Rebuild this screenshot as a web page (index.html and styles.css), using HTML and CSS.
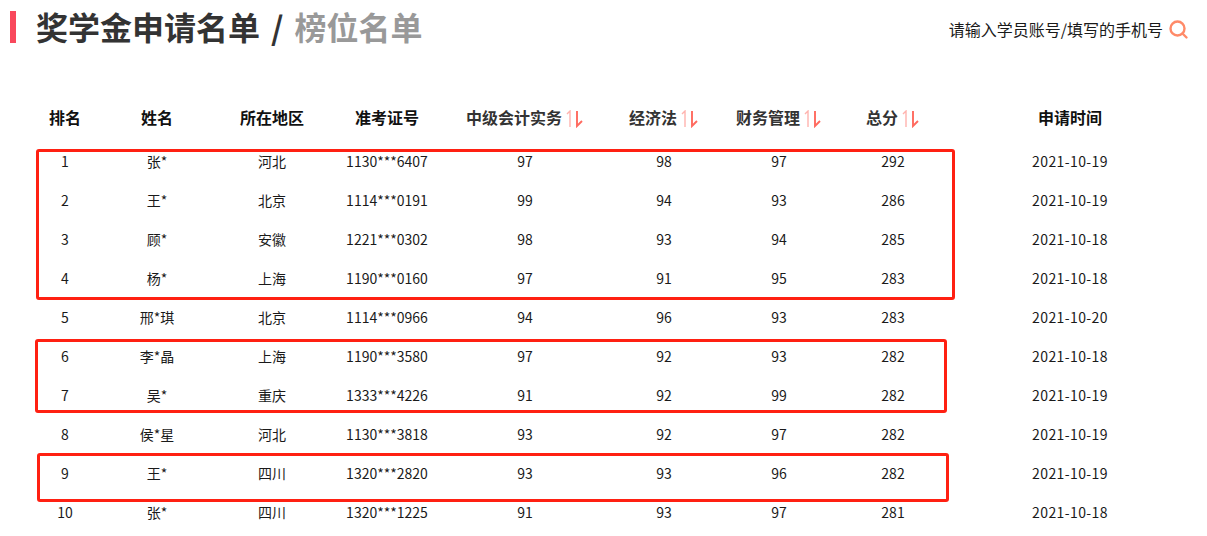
FILE: index.html
```html
<!DOCTYPE html>
<html lang="zh-CN">
<head>
    <meta charset="UTF-8">
    <title>奖学金申请名单</title>
    <link rel="stylesheet" href="styles.css">
</head>
<body>
    <div class="page">
        <div class="top">
            <h1 class="title"><span class="title-mark"></span><span>奖学金申请名单<span class="title-sep">/</span><span class="title-sub">榜位名单</span></span></h1>
            <div class="search">
                <span class="search-text">请输入学员账号/填写的手机号</span>
                <svg class="search-icon" width="20" height="20" viewBox="0 0 20 20" fill="none" stroke="#ff8a68" stroke-width="2.4">
                    <circle cx="8.5" cy="8.5" r="7"/>
                    <path d="M13.5 13.5l4 4" stroke-linecap="round"/>
                </svg>
            </div>
        </div>
        <table class="rank-table">
            <colgroup>
                <col class="c1"><col class="c2"><col class="c3"><col class="c4"><col class="c5">
                <col class="c6"><col class="c7"><col class="c8"><col class="c9">
            </colgroup>
            <thead>
                <tr>
                    <th class="plain">排名</th>
                    <th class="plain">姓名</th>
                    <th class="plain">所在地区</th>
                    <th class="plain">准考证号</th>
                    <th>中级会计实务<svg class="sort" width="18" height="18" viewBox="0 0 18 18" fill="none"><path d="M2 4l3-3v16" stroke="#ffb3ae" stroke-width="1.4"/><path d="M12 1v15l5-5" stroke="#ff6a5f" stroke-width="1.9"/></svg></th>
                    <th>经济法<svg class="sort" width="18" height="18" viewBox="0 0 18 18" fill="none"><path d="M2 4l3-3v16" stroke="#ffb3ae" stroke-width="1.4"/><path d="M12 1v15l5-5" stroke="#ff6a5f" stroke-width="1.9"/></svg></th>
                    <th>财务管理<svg class="sort" width="18" height="18" viewBox="0 0 18 18" fill="none"><path d="M2 4l3-3v16" stroke="#ffb3ae" stroke-width="1.4"/><path d="M12 1v15l5-5" stroke="#ff6a5f" stroke-width="1.9"/></svg></th>
                    <th>总分<svg class="sort" width="18" height="18" viewBox="0 0 18 18" fill="none"><path d="M2 4l3-3v16" stroke="#ffb3ae" stroke-width="1.4"/><path d="M12 1v15l5-5" stroke="#ff6a5f" stroke-width="1.9"/></svg></th>
                    <th class="plain">申请时间</th>
                </tr>
            </thead>
            <tbody>
                <tr><td>1</td><td>张*</td><td>河北</td><td>1130***6407</td><td>97</td><td>98</td><td>97</td><td>292</td><td class="date">2021-10-19</td></tr>
                <tr><td>2</td><td>王*</td><td>北京</td><td>1114***0191</td><td>99</td><td>94</td><td>93</td><td>286</td><td class="date">2021-10-19</td></tr>
                <tr><td>3</td><td>顾*</td><td>安徽</td><td>1221***0302</td><td>98</td><td>93</td><td>94</td><td>285</td><td class="date">2021-10-18</td></tr>
                <tr><td>4</td><td>杨*</td><td>上海</td><td>1190***0160</td><td>97</td><td>91</td><td>95</td><td>283</td><td class="date">2021-10-18</td></tr>
                <tr><td>5</td><td>邢*琪</td><td>北京</td><td>1114***0966</td><td>94</td><td>96</td><td>93</td><td>283</td><td class="date">2021-10-20</td></tr>
                <tr><td>6</td><td>李*晶</td><td>上海</td><td>1190***3580</td><td>97</td><td>92</td><td>93</td><td>282</td><td class="date">2021-10-18</td></tr>
                <tr><td>7</td><td>吴*</td><td>重庆</td><td>1333***4226</td><td>91</td><td>92</td><td>99</td><td>282</td><td class="date">2021-10-19</td></tr>
                <tr><td>8</td><td>侯*星</td><td>河北</td><td>1130***3818</td><td>93</td><td>92</td><td>97</td><td>282</td><td class="date">2021-10-19</td></tr>
                <tr><td>9</td><td>王*</td><td>四川</td><td>1320***2820</td><td>93</td><td>93</td><td>96</td><td>282</td><td class="date">2021-10-19</td></tr>
                <tr><td>10</td><td>张*</td><td>四川</td><td>1320***1225</td><td>91</td><td>93</td><td>97</td><td>281</td><td class="date">2021-10-18</td></tr>
            </tbody>
        </table>
        <!-- hand-drawn red marks over the rows -->
        <div class="mark mark-a"></div>
        <div class="mark mark-b"></div>
        <div class="mark mark-c"></div>
    </div>
</body>
</html>
```

FILE: styles.css
```css
* {
    box-sizing: border-box;
}

html, body {
    margin: 0;
    height: 536px;
    overflow: hidden;
    background-color: white;
}

body {
    font-family: 'Noto Sans CJK SC', 'Open Sans', sans-serif;
    color: #1a1a1a;
}

.page {
    position: relative;
    width: 1207px;
    height: 536px;
}

.top {
    display: flex;
    justify-content: space-between;
    align-items: flex-start;
    height: 93px;
    padding: 11px 18px 0 10px;
}

.title {
    display: flex;
    align-items: flex-start;
    height: 32px;
    margin: 0;
    font-size: 32px;
    font-weight: 700;
    line-height: 30px;
    color: #333;
    white-space: nowrap;
}

.title-mark {
    width: 6px;
    height: 32px;
    margin-right: 20px;
    background-color: #f9485c;
}

.title-sep {
    margin: 0 11px 0 11px;
}

.title-sub {
    color: #999;
}

.search {
    display: flex;
    align-items: center;
    gap: 6px;
    margin-top: 8px;
    font-size: 16px;
    line-height: 20px;
}

.search-text {
    margin-bottom: 2px;
}

.rank-table {
    table-layout: fixed;
    width: 1170px;
    margin-left: 25px;
    border-collapse: collapse;
}

.c1 { width: 80px; }
.c2 { width: 104px; }
.c3 { width: 126px; }
.c4 { width: 104px; }
.c5 { width: 172px; }
.c6 { width: 106px; }
.c7 { width: 124px; }
.c8 { width: 104px; }
.c9 { width: 250px; }

.rank-table th {
    height: 48px;
    padding: 0;
    font-size: 16px;
    font-weight: 700;
    color: #333;
    white-space: nowrap;
}

.rank-table th.plain {
    color: #111;
}

.rank-table td {
    height: 39px;
    padding: 0;
    font-size: 14px;
    text-align: center;
    white-space: nowrap;
}

.rank-table td.date {
    letter-spacing: 0.4px;
}

.sort {
    margin: 0 1px 0 3px;
    vertical-align: -4px;
}

.mark {
    position: absolute;
    border: 3px solid #ff2012;
    border-radius: 3px;
}

.mark-a {
    left: 36px;
    top: 149px;
    width: 919px;
    height: 151px;
}

.mark-b {
    left: 35px;
    top: 339px;
    width: 912px;
    height: 74px;
}

.mark-c {
    left: 37px;
    top: 453px;
    width: 912px;
    height: 49px;
}
```
